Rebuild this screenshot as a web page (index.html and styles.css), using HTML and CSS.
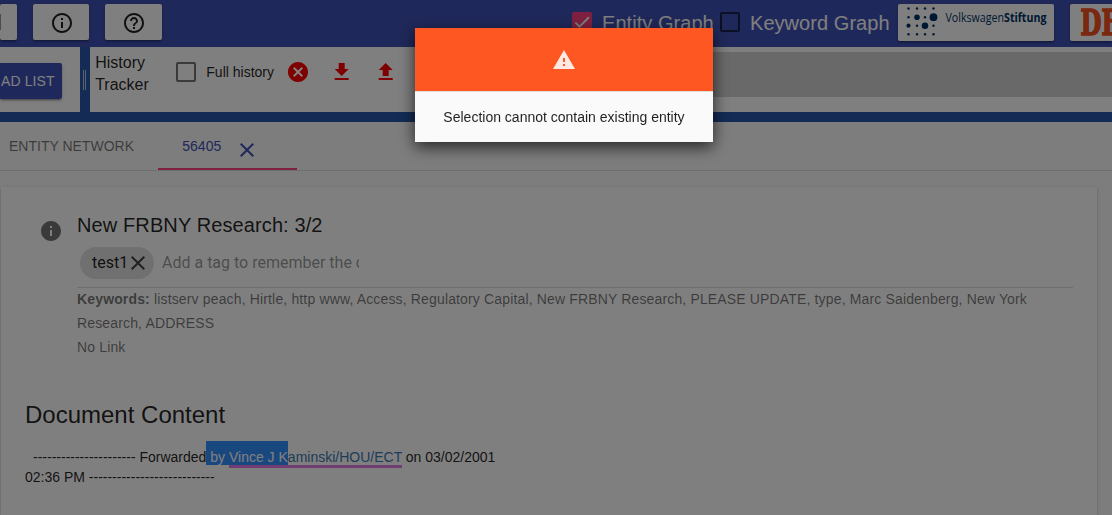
FILE: index.html
```html
<!DOCTYPE html>
<html lang="en">
<head>
<meta charset="utf-8">
<title>Entity Network</title>
<link rel="stylesheet" href="styles.css">
</head>
<body>
<header class="toolbar">
  <div class="tool tool-first"><span class="tool-edge"></span></div>
  <div class="tool tool-info"><svg viewBox="0 0 24 24" width="24" height="24"><path d="M11 7h2v2h-2zm0 4h2v6h-2zm1-9C6.48 2 2 6.48 2 12s4.48 10 10 10 10-4.48 10-10S17.52 2 12 2zm0 18c-4.41 0-8-3.59-8-8s3.59-8 8-8 8 3.59 8 8-3.59 8-8 8z"/></svg></div>
  <div class="tool tool-help"><svg viewBox="0 0 24 24" width="24" height="24"><path d="M11 18h2v-2h-2v2zm1-16C6.48 2 2 6.48 2 12s4.48 10 10 10 10-4.48 10-10S17.52 2 12 2zm0 18c-4.41 0-8-3.59-8-8s3.59-8 8-8 8 3.59 8 8-3.59 8-8 8zm0-14c-2.21 0-4 1.79-4 4h2c0-1.1.9-2 2-2s2 .9 2 2c0 2-3 1.75-3 5h2c0-2.25 3-2.5 3-5 0-2.21-1.79-4-4-4z"/></svg></div>
  <div class="graph-option option-entity"><span class="box box-on"><svg viewBox="0 0 24 24" width="20" height="20"><path d="M4.1 12.7 9 17.6 20.3 6.3" fill="none" stroke="#fff" stroke-width="2.2"/></svg></span><span>Entity Graph</span></div>
  <div class="graph-option"><span class="box"></span><span>Keyword Graph</span></div>
  <div class="logo logo-vw">
    <svg width="156" height="37" viewBox="0 0 156 37">
      <g fill="#003366">
        <circle cx="10.5" cy="4.5" r="1.2"/><circle cx="19" cy="4.5" r="1.2"/><circle cx="27" cy="4.5" r="1.2"/><circle cx="35.5" cy="4.5" r="1.2"/>
        <circle cx="10.5" cy="13.2" r="1.2"/><circle cx="19" cy="13.2" r="2.8"/><circle cx="27" cy="13.2" r="1.2"/><circle cx="35.5" cy="13.2" r="3.9"/>
        <circle cx="10.5" cy="21.7" r="2.1"/><circle cx="19" cy="21.7" r="1.2"/><circle cx="27" cy="21.7" r="3.3"/><circle cx="35.5" cy="21.7" r="1.2"/>
        <circle cx="10.5" cy="30.3" r="1.2"/><circle cx="19" cy="30.3" r="1.2"/><circle cx="27" cy="30.3" r="1.2"/><circle cx="35.5" cy="30.3" r="1.2"/>
        <text class="vw-text" x="47.5" y="18" textLength="101" lengthAdjust="spacingAndGlyphs">Volkswagen<tspan class="vw-bold">Stiftung</tspan></text>
      </g>
    </svg>
  </div>
  <div class="logo logo-dfg">
    <svg width="42" height="37" viewBox="0 0 42 37"><text class="dfg-text" x="10.5" y="31.3" textLength="38" lengthAdjust="spacingAndGlyphs">DF</text></svg>
  </div>
</header>

<section class="panels">
  <div class="list-panel"><button class="list-button">AD LIST</button></div>
  <div class="gutter"><span class="grip"></span></div>
  <div class="history-panel">
    <div class="history-title">History Tracker</div>
    <span class="box"></span>
    <span class="history-label">Full history</span>
    <svg class="red icon-cancel" viewBox="0 0 24 24" width="24" height="24"><path d="M12 2C6.47 2 2 6.47 2 12s4.47 10 10 10 10-4.47 10-10S17.53 2 12 2zm5 13.59L15.59 17 12 13.41 8.41 17 7 15.59 10.59 12 7 8.41 8.41 7 12 10.59 15.59 7 17 8.41 13.41 12 17 15.59z"/></svg>
    <svg class="red icon-down" viewBox="0 0 24 24" width="24" height="24"><path d="M18.7 9h-4V3h-6v6h-4l7 7 7-7zM4.7 18v2h14v-2h-14z"/></svg>
    <svg class="red icon-up" viewBox="0 0 24 24" width="24" height="24"><path d="M8.7 16h6v-6h4l-7-7-7 7h4zm-4 2h14v2h-14z"/></svg>
    <div class="history-track"></div>
  </div>
</section>

<nav class="tabs">
  <div class="tab">ENTITY NETWORK</div>
  <div class="tab tab-active"><span>56405</span><svg class="tab-close" viewBox="0 0 24 24" width="24" height="24"><path d="M19 6.41L17.59 5 12 10.59 6.41 5 5 6.41 10.59 12 5 17.59 6.41 19 12 13.41 17.59 19 19 17.59 13.41 12z"/></svg></div>
</nav>

<main class="card">
  <div class="card-head">
    <svg class="card-info" viewBox="0 0 24 24" width="24" height="24"><path d="M12 2C6.48 2 2 6.48 2 12s4.48 10 10 10 10-4.48 10-10S17.52 2 12 2zm1 15h-2v-6h2v6zm0-8h-2V7h2v2z"/></svg>
    <div class="card-meta">
      <h1 class="title">New FRBNY Research: 3/2</h1>
      <div class="tags">
        <span class="chip">test1<svg viewBox="0 0 24 24" width="24" height="24"><path d="M19 6.41L17.59 5 12 10.59 6.41 5 5 6.41 10.59 12 5 17.59 6.41 19 12 13.41 17.59 19 19 17.59 13.41 12z"/></svg></span>
        <span class="tag-input">Add a tag to remember the c</span>
      </div>
      <div class="keywords"><b>Keywords:</b> listserv peach, Hirtle, http www, Access, Regulatory Capital, New FRBNY Research, PLEASE UPDATE, type, Marc Saidenberg, New York<br>Research, ADDRESS<br>No Link</div>
    </div>
  </div>
  <h2 class="content-title">Document Content</h2>
  <p class="content"><span class="lead">---------------------- Forwarded</span><span class="selected"> by </span><span class="entity"><span class="selected">Vince J K</span>aminski/HOU/ECT</span> on 03/02/2001<br>02:36 PM ---------------------------</p>
</main>

<div class="backdrop">
  <div class="dialog">
    <div class="dialog-head"><svg viewBox="0 0 24 24" width="24" height="24"><path d="M1 21h22L12 2 1 21zm12-3h-2v-2h2v2zm0-4h-2v-4h2v4z"/></svg></div>
    <div class="dialog-body">Selection cannot contain existing entity</div>
  </div>
</div>
</body>
</html>
```

FILE: styles.css
```css
* { box-sizing: border-box; }
body {
  margin: 0;
  height: 515px;
  overflow: hidden;
  background: #fafafa;
  color: rgba(0, 0, 0, .87);
  font: 14px/20px "Liberation Sans", Arial, sans-serif;
}
svg { display: block; flex: none; }

.toolbar {
  display: flex;
  align-items: flex-start;
  height: 47px;
  padding-top: 4px;
  background: #3f51b5;
}
.tool, .logo {
  display: flex;
  align-items: center;
  justify-content: center;
  flex: none;
  height: 36px;
  border-radius: 2px;
  background: #fff;
  box-shadow: 0 3px 1px -2px rgba(0,0,0,.2), 0 2px 2px rgba(0,0,0,.14), 0 1px 5px rgba(0,0,0,.12);
}
.tool svg { margin: 1px 0 0 1px; fill: rgba(0,0,0,.87); }
.tool-first { width: 17px; justify-content: flex-start; }
.tool-edge { width: 1px; height: 16px; background: #999; }
.tool-info { width: 56px; margin-left: 16px; }
.tool-help { width: 57px; margin-left: 16px; }
.graph-option {
  display: flex;
  align-items: center;
  gap: 10px;
  height: 36px;
  margin-left: 6px;
  color: #fff;
  font-size: 20px;
  letter-spacing: .05px;
  white-space: nowrap;
}
.graph-option > span:last-child { padding-top: 2px; }
.option-entity { width: 142px; margin-left: 410px; }
.box {
  flex: none;
  width: 20px;
  height: 20px;
  border: 2px solid rgba(0,0,0,.54);
  border-radius: 2px;
}
.toolbar .box { border-color: rgba(0,0,0,.6); }
.toolbar .box-on { border: 0; background: #ff4081; }
.logo { height: 37px; overflow: hidden; }
.logo-vw { width: 156px; margin-left: 8px; }
.logo-dfg { width: 42px; margin-left: 16px; border-radius: 2px 0 0 2px; }
.vw-text { font: 13px "Open Sans", sans-serif; }
.vw-bold { font-weight: 700; }
.dfg-text { font: bold 35px "DejaVu Serif", serif; fill: #f4511e; stroke: #f4511e; stroke-width: 1.6px; }

.panels { display: flex; height: 75px; border-bottom: 10px solid #2757ab; background: #fff; }
.list-panel { width: 80px; padding-top: 16px; }
.list-button {
  display: block;
  width: 62px;
  height: 36px;
  padding: 0 8px 0 1px;
  border: 0;
  border-radius: 0 2px 2px 0;
  background: #3f51b5;
  color: #fff;
  font: 14px/36px "Liberation Sans", Arial, sans-serif;
  letter-spacing: .1px;
  white-space: nowrap;
  text-align: left;
  box-shadow: 0 3px 1px -2px rgba(0,0,0,.2), 0 2px 2px rgba(0,0,0,.14), 0 1px 5px rgba(0,0,0,.12);
}
.gutter { width: 10px; padding: 23px 0 0 3px; background: #2757ab; }
.grip { display: block; width: 3px; height: 20px; border: solid #b9c4dc; border-width: 0 1px; }
.history-panel { display: flex; align-items: flex-start; flex: 1; }
.history-title { width: 86px; padding: 5px 20px 0 5.2px; font-size: 16px; line-height: 22px; }
.history-panel .box { margin-top: 15px; }
.history-label { width: 70px; margin: 15px 0 0 10.3px; white-space: nowrap; }
.red { margin-top: 13px; fill: #f00; }
.icon-cancel { margin-left: 9.7px; }
.icon-down { margin-left: 20px; }
.icon-up { margin-left: 20px; }
.history-track { flex: 1; height: 45px; margin: 5px 0 0 30px; background: #d3d3d3; }

.tabs { display: flex; height: 49px; border-bottom: 1px solid #dcdcdc; }
.tab { width: 158px; padding-left: 9px; line-height: 48px; color: rgba(0,0,0,.54); }
.tab-active {
  display: flex;
  width: 139px;
  height: 48px;
  padding-left: 24.3px;
  border-bottom: 2px solid #ff4081;
  color: #3f51b5;
}
.tab-close { margin: 16px 0 0 14px; fill: #3f51b5; }

.card {
  width: 1096px;
  height: 328px;
  margin: 16px 0 0 1px;
  padding: 24px 24px 0;
  background: #fff;
  box-shadow: 0 2px 2px rgba(0,0,0,.14), 0 1px 4px rgba(0,0,0,.12);
}
.card-head { display: flex; padding-left: 14px; }
.card-info { margin-top: 8px; fill: rgba(0,0,0,.54); }
.card-meta { width: 996px; margin-left: 14px; }
.title { margin: 0; padding-top: 2px; font-size: 20px; font-weight: 400; line-height: 24px; letter-spacing: .11px; }
.tags {
  display: flex;
  align-items: center;
  height: 51px;
  padding-top: 2px;
  border-bottom: 1px solid #dcdcdc;
  font: 16px/20px Roboto, sans-serif;
}
.chip { display: flex; align-items: center; width: 74px; height: 32px; margin-left: 3px; padding-left: 12px; border-radius: 16px; background: #e0e0e0; }
.chip svg { margin-left: -2px; fill: rgba(0,0,0,.7); }
.tag-input { width: 197px; margin-left: 8px; overflow: hidden; color: rgba(0,0,0,.42); white-space: nowrap; }
.keywords { margin-top: -1px; line-height: 24px; letter-spacing: .15px; color: rgba(0,0,0,.54); white-space: nowrap; }
.content-title { margin: 40px 0 0; font-size: 24px; font-weight: 400; line-height: 32px; }
.content { margin: 16px 0 0; }
.lead { margin-left: 8px; }
.selected { padding-top: 8px; background: #3390ff; color: #fff; white-space: pre; }
.entity { border-bottom: 3px solid #e377e6; color: #3c7ab0; }

.backdrop { position: fixed; inset: 0; display: flex; align-items: flex-start; padding: 28px 0 0 415px; background: rgba(0,0,0,.5); }
.dialog { width: 298px; height: 114px; background: #fafafa; box-shadow: 0 5px 15px rgba(0,0,0,.7); }
.dialog-head { display: flex; align-items: center; justify-content: center; height: 63px; background: #ff5722; }
.dialog-head svg { fill: #fff; opacity: .87; }
.dialog-body { border-top: 1px solid #e3dcd9; line-height: 50px; text-align: center; }
```
